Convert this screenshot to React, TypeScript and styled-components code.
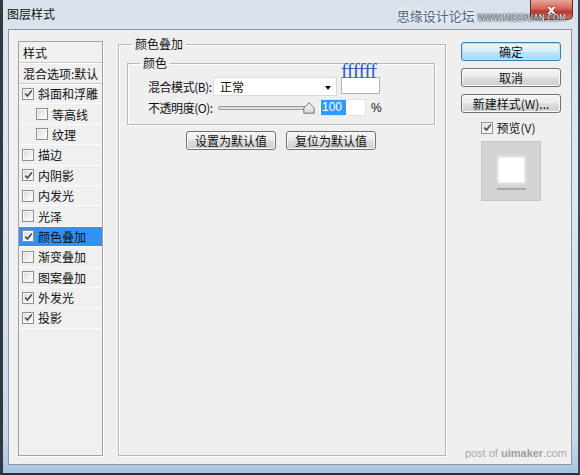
import React from "react";
import styled, { createGlobalStyle, css } from "styled-components";

const GlobalStyle = createGlobalStyle`
  html, body { margin: 0; padding: 0; background: #dfe6ee; }
  body { width: 580px; height: 475px; overflow: hidden; font-family: "Noto Sans CJK SC", "Noto Sans", sans-serif; }
  * { box-sizing: border-box; }
`;

const CJK = `"Noto Sans CJK SC", "Noto Sans", sans-serif`;

const Window = styled.div`
  position: relative;
  width: 580px;
  height: 475px;
  display: flex;
  flex-direction: column;
  background: linear-gradient(180deg, #d9e2ec 0%, #dfe7ef 40%, #c9d9ea 92%, #aac4df 100%);
  border-left: 3px solid #2e3944;
  border-right: 2px solid #3d4955;
  border-bottom: 2px solid #25303b;
  padding: 0 6px 8px 5px;
`;

const TitleBar = styled.div`
  height: 29px;
  flex: none;
  display: flex;
  align-items: flex-start;
  position: relative;
`;

const TitleText = styled.div`
  font-family: ${CJK};
  font-size: 12px;
  line-height: 14px;
  color: #111;
  padding: 7px 0 0 0;
  margin-left: -1px;
`;

const Spacer = styled.div`
  flex: 1;
`;

const CloseButton = styled.div`
  width: 43px;
  height: 20px;
  margin-right: -1px;
  border: 1px solid #6b2a26;
  border-top: none;
  border-radius: 0 0 5px 5px;
  background: linear-gradient(180deg, #e8a596 0%, #d2655a 45%, #c0392f 60%, #d0716a 100%);
  display: flex;
  align-items: center;
  justify-content: center;
  color: #fff;
  font-family: "DejaVu Sans", sans-serif;
  font-weight: bold;
  font-size: 13px;
  text-shadow: 0 0 2px #5a1a14;
`;

const SiteMark = styled.div`
  position: absolute;
  right: 6px;
  top: 6px;
  display: flex;
  align-items: baseline;
  gap: 3px;
`;

const SiteName = styled.span`
  font-family: ${CJK};
  font-size: 13px;
  color: #55677e;
  text-shadow: 0 0 4px #fff;
`;

const SiteUrl = styled.span`
  font-family: "DejaVu Sans", sans-serif;
  font-size: 8px;
  color: #f4f6f8;
  text-shadow: 0 0 1px #1e2a36, 0 0 1px #1e2a36, 0 0 2px #1e2a36;
`;

const Client = styled.div`
  flex: 1;
  background: #efefef;
  border: 1px solid #8c97a3;
  display: flex;
  align-items: stretch;
  padding: 0 10px 8px 9px;
  position: relative;
`;

const StyleList = styled.div`
  width: 85px;
  margin-top: 11px;
  border: 1px solid #a3a3a3;
  box-shadow: 1px 1px 0 #ffffff;
  background: #f0f0f0;
  display: flex;
  flex-direction: column;
  overflow: hidden;
`;

const ListHead = styled.div`
  height: 21px;
  flex: none;
  display: flex;
  align-items: center;
  padding-left: 4px;
  font-family: ${CJK};
  font-size: 12px;
  color: #111;
  white-space: nowrap;
  overflow: hidden;
  border-bottom: 1px solid #c9c9c9;
  box-shadow: 0 1px 0 #ffffff;
`;

const ListRow = styled.div<{ $indent?: boolean; $active?: boolean }>`
  height: 20.4px;
  flex: none;
  display: flex;
  align-items: center;
  gap: 4px;
  padding-left: ${(p) => (p.$indent ? "17px" : "3px")};
  font-family: ${CJK};
  font-size: 12px;
  color: #111;
  white-space: nowrap;
  border-bottom: 1px solid #fbfbfb;
  ${(p) =>
    p.$active &&
    css`
      background: #3391f3;
    `}
`;

const Box = styled.span`
  width: 12px;
  height: 12px;
  flex: none;
  border: 1px solid #8e8f8f;
  background: linear-gradient(135deg, #d6d6d6 0%, #f2f2f2 60%, #ffffff 100%);
  box-shadow: inset 0 0 0 1px #f6f6f6;
  display: flex;
  align-items: center;
  justify-content: center;
`;

const Check = ({ on }: { on?: boolean }) => (
  <Box>
    {on && (
      <svg width="9" height="9" viewBox="0 0 9 9">
        <path d="M1.3 4.6 L3.5 7 L7.8 1.4" fill="none" stroke="#3b4a6b" strokeWidth="1.6" />
      </svg>
    )}
  </Box>
);

const Middle = styled.div`
  width: 328px;
  margin-left: 15px;
  margin-top: 6px;
  display: flex;
`;

const Group = styled.fieldset<{ $outer?: boolean }>`
  margin: 0;
  padding: 0;
  min-width: 0;
  border: 1px solid #b9b9b9;
  box-shadow: inset 1px 1px 0 #ffffff, 1px 1px 0 #ffffff;
  ${(p) =>
    p.$outer &&
    css`
      flex: 1;
    `}
`;

const Legend = styled.legend<{ $shift: number }>`
  margin-left: ${(p) => p.$shift}px;
  padding: 0 3px;
  font-family: ${CJK};
  font-size: 12px;
  line-height: 16px;
  color: #111;
`;

const OuterBody = styled.div`
  padding: 3px 10px 0 8px;
  display: flex;
  flex-direction: column;
`;

const InnerBody = styled.div`
  padding: 6px 0 7px 20px;
  display: flex;
  flex-direction: column;
  gap: 2px;
`;

const FieldRow = styled.div`
  display: flex;
  align-items: center;
  height: 19px;
`;

const Label = styled.span`
  width: 65px;
  flex: none;
  font-family: ${CJK};
  font-size: 12px;
  letter-spacing: -0.45px;
  color: #111;
  white-space: nowrap;
`;

const Select = styled.div`
  width: 124px;
  height: 19px;
  background: #ffffff;
  border: 1px solid #dadada;
  display: flex;
  align-items: center;
  justify-content: space-between;
  padding: 0 5px 0 6px;
  font-family: ${CJK};
  font-size: 12px;
  color: #111;
`;

const Arrow = styled.span`
  width: 0;
  height: 0;
  border-left: 3.5px solid transparent;
  border-right: 3.5px solid transparent;
  border-top: 4px solid #111;
  margin-top: 2px;
`;

const Swatch = styled.div`
  position: relative;
  width: 39px;
  height: 17px;
  margin-left: 4px;
  margin-top: -2px;
  background: #ffffff;
  border: 1px solid #b4b4b4;
`;

const HexNote = styled.span`
  position: absolute;
  left: -1px;
  bottom: 100%;
  margin-bottom: -4px;
  font-family: "Liberation Serif", serif;
  font-size: 21px;
  line-height: 21px;
  letter-spacing: -0.8px;
  color: #3a5fc4;
`;

const Slider = styled.div`
  position: relative;
  width: 97px;
  height: 12px;
  margin-left: 5px;
  display: flex;
  align-items: center;
`;

const Track = styled.div`
  width: 93px;
  height: 4px;
  border: 1px solid #9a9a9a;
  border-radius: 2px;
  background: linear-gradient(180deg, #cfcfcf, #eeeeee);
`;

const Thumb = styled.svg`
  position: absolute;
  left: 85px;
  top: 0;
`;

const NumberBox = styled.div`
  width: 48px;
  height: 17px;
  margin-left: 3px;
  background: #ffffff;
  border: 1px solid #e2e2e2;
  display: flex;
  align-items: center;
  padding-left: 2px;
`;

const Selected = styled.span`
  background: #3399ff;
  color: #ffffff;
  font-family: "Liberation Sans", sans-serif;
  font-size: 12px;
  line-height: 15px;
  padding: 0 4px 0 1px;
`;

const Percent = styled.span`
  margin-left: 5px;
  font-family: "Liberation Sans", sans-serif;
  font-size: 12px;
  color: #111;
`;

const ButtonRow = styled.div`
  display: flex;
  justify-content: center;
  gap: 10px;
  margin-top: 6px;
`;

const Button = styled.div<{ $w?: number; $default?: boolean }>`
  width: ${(p) => p.$w ?? 100}px;
  height: 19px;
  border: 1px solid #707070;
  border-radius: 3px;
  background: linear-gradient(180deg, #f5f5f5 0%, #ebebeb 48%, #dcdcdc 52%, #cfcfcf 100%);
  box-shadow: inset 0 0 0 1px #fbfbfb;
  display: flex;
  align-items: center;
  justify-content: center;
  font-family: ${CJK};
  font-size: 12px;
  color: #111;
  white-space: nowrap;
  ${(p) =>
    p.$default &&
    css`
      border-color: #3c7fb1;
      background: linear-gradient(180deg, #eaf6fd 0%, #d9f0fc 48%, #bee6fd 52%, #a7d9f5 100%);
      box-shadow: inset 0 0 0 1px #b8e0f5;
    `}
`;

const RightCol = styled.div`
  width: 100px;
  margin-left: 15px;
  margin-top: 12px;
  display: flex;
  flex-direction: column;
  align-items: center;
  gap: 7px;
`;

const PreviewCheck = styled.div`
  display: flex;
  align-items: center;
  gap: 3px;
  margin-left: -5px;
  margin-top: -1px;
  font-family: ${CJK};
  font-size: 12px;
  color: #111;
`;

const PreviewBox = styled.div`
  width: 60px;
  height: 60px;
  margin-top: -2px;
  background: #d3d3d3;
  border: 1px solid #c6c6c6;
  display: flex;
  flex-direction: column;
  align-items: center;
  justify-content: center;
  gap: 5px;
`;

const PreviewSquare = styled.div`
  width: 27px;
  height: 26px;
  margin-top: 4px;
  background: #ffffff;
  box-shadow: 0 0 3px 1px #e6e6e6, inset 0 0 3px #e0e0e0;
`;

const PreviewShadow = styled.div`
  width: 29px;
  height: 2px;
  background: #a9a9a9;
  filter: blur(0.4px);
`;

const Watermark = styled.div`
  position: absolute;
  right: 4px;
  bottom: 5px;
  font-family: "Liberation Sans", sans-serif;
  font-size: 11px;
  color: #ababab;
  b { color: #9f9f9f; }
`;

const rows: { label: string; on?: boolean; indent?: boolean; active?: boolean }[] = [
  { label: "斜面和浮雕", on: true },
  { label: "等高线", indent: true },
  { label: "纹理", indent: true },
  { label: "描边" },
  { label: "内阴影", on: true },
  { label: "内发光" },
  { label: "光泽" },
  { label: "颜色叠加", on: true, active: true },
  { label: "渐变叠加" },
  { label: "图案叠加" },
  { label: "外发光", on: true },
  { label: "投影", on: true },
];

export default function App() {
  return (
    <>
      <GlobalStyle />
      <Window>
        <TitleBar>
          <TitleText>图层样式</TitleText>
          <Spacer />
          <CloseButton>x</CloseButton>
          <SiteMark>
            <SiteName>思缘设计论坛</SiteName>
            <SiteUrl>WWW.MISSYUAN.COM</SiteUrl>
          </SiteMark>
        </TitleBar>
        <Client>
          <StyleList>
            <ListHead>样式</ListHead>
            <ListHead>混合选项:默认</ListHead>
            {rows.map((r) => (
              <ListRow key={r.label} $indent={r.indent} $active={r.active}>
                <Check on={r.on} />
                <span>{r.label}</span>
              </ListRow>
            ))}
          </StyleList>

          <Middle>
            <Group $outer>
              <Legend $shift={13}>颜色叠加</Legend>
              <OuterBody>
                <Group>
                  <Legend $shift={12}>颜色</Legend>
                  <InnerBody>
                    <FieldRow>
                      <Label>混合模式(B):</Label>
                      <Select>
                        <span>正常</span>
                        <Arrow />
                      </Select>
                      <Swatch>
                        <HexNote>ffffff</HexNote>
                      </Swatch>
                    </FieldRow>
                    <FieldRow>
                      <Label>不透明度(O):</Label>
                      <Slider>
                        <Track />
                        <Thumb width="12" height="12" viewBox="0 0 12 12">
                          <defs>
                            <linearGradient id="tg" x1="0" y1="0" x2="0" y2="1">
                              <stop offset="0" stopColor="#fafafa" />
                              <stop offset="1" stopColor="#d4d4d4" />
                            </linearGradient>
                          </defs>
                          <path d="M6 0.8 L11.2 6 L11.2 11.2 L0.8 11.2 L0.8 6 Z" fill="url(#tg)" stroke="#777" strokeWidth="1" />
                        </Thumb>
                      </Slider>
                      <NumberBox>
                        <Selected>100</Selected>
                      </NumberBox>
                      <Percent>%</Percent>
                    </FieldRow>
                  </InnerBody>
                </Group>
                <ButtonRow>
                  <Button $w={90}>设置为默认值</Button>
                  <Button $w={90}>复位为默认值</Button>
                </ButtonRow>
              </OuterBody>
            </Group>
          </Middle>

          <RightCol>
            <Button $default>确定</Button>
            <Button>取消</Button>
            <Button>新建样式(W)...</Button>
            <PreviewCheck>
              <Check on />
              <span>预览(V)</span>
            </PreviewCheck>
            <PreviewBox>
              <PreviewSquare />
              <PreviewShadow />
            </PreviewBox>
          </RightCol>

          <Watermark>
            post of <b>uimaker</b>.com
          </Watermark>
        </Client>
      </Window>
    </>
  );
}
